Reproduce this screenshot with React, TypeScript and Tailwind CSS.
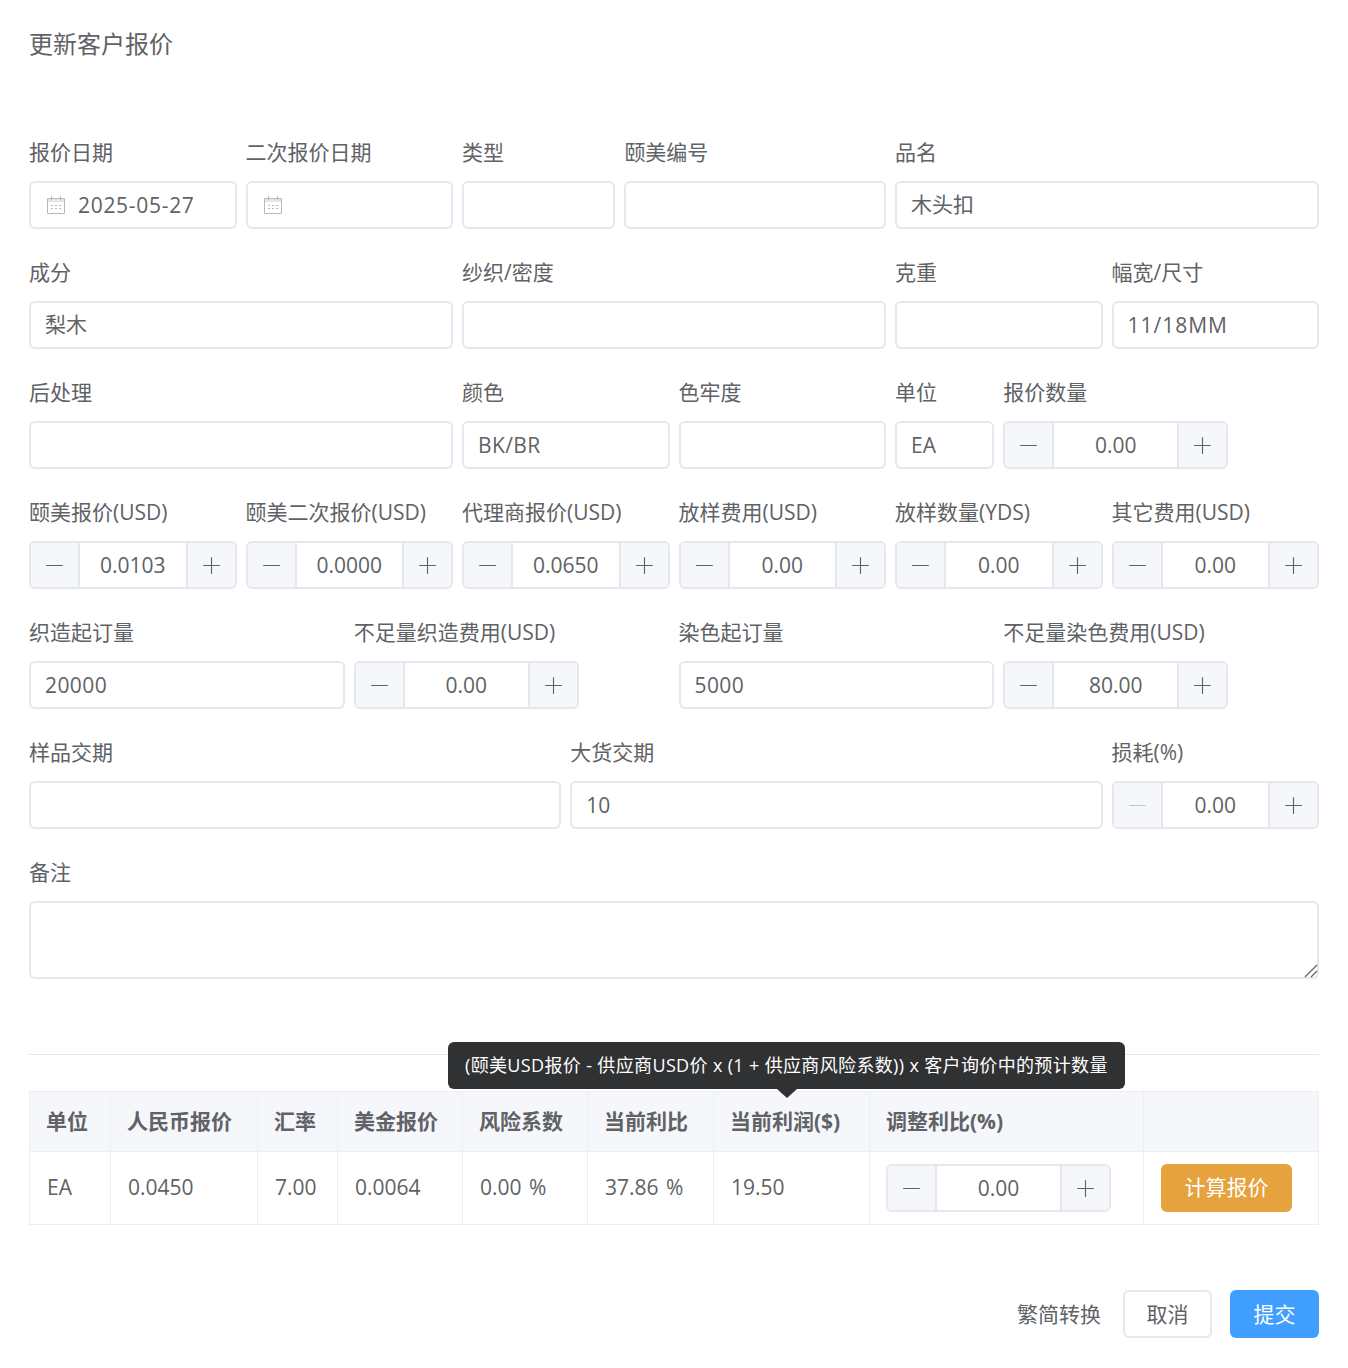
import { Minus, Plus } from "lucide-react";

const font = "font-['Open_Sans','Noto_Sans_CJK_SC',sans-serif]";

function CalendarIcon() {
    return (
        <svg width="20" height="20" viewBox="0 0 20 20" fill="none" className="shrink-0 text-[#b4b8c0]">
            <path d="M1.5 3.5h17v15h-17z" stroke="currentColor" />
            <path d="M1.5 3.5h17v3.5h-17z" fill="currentColor" opacity="0.35" />
            <path d="M5.5 1v4M14.5 1v4" stroke="currentColor" />
            <path d="M5 10.5h2M9 10.5h2M13 10.5h2M5 13.5h2M9 13.5h2M13 13.5h2" stroke="currentColor" />
        </svg>
    );
}

function Field({ label, span, children }: { label: string; span: string; children: React.ReactNode }) {
    return (
        <div className={span + " mb-[28px]"}>
            <div className="h-[32px] leading-[31px] mb-[12px] text-[21px] text-[#606266] whitespace-nowrap">{label}</div>
            {children}
        </div>
    );
}

function TextInput({ value = "", extra = "" }: { value?: string; extra?: string }) {
    return (
        <input
            readOnly
            value={value}
            className={"block w-full h-[48px] px-[14px] border-2 border-[#e4e7ed] rounded-[6px] bg-white text-[21px] text-[#606266] outline-none " + extra}
        />
    );
}

function DateInput({ value = "" }: { value?: string }) {
    return (
        <div className="flex items-center gap-[12px] h-[48px] pl-[15px] border-2 border-[#e4e7ed] rounded-[6px] bg-white text-[21px] text-[#606266]">
            <CalendarIcon />
            <span className="pt-[2px] tracking-[0.7px]">{value}</span>
        </div>
    );
}

function Stepper({ value, fixed, disabled }: { value: string; fixed?: boolean; disabled?: boolean }) {
    return (
        <div className={(fixed ? "w-[225px] " : "w-full ") + "flex h-[48px] border-2 border-[#e4e7ed] rounded-[6px] overflow-hidden bg-white"}>
            <div className="w-[49px] shrink-0 flex items-center justify-center bg-[#f5f7fa] border-r-2 border-[#e4e7ed]">
                <Minus size={27} strokeWidth={1} className={disabled ? "text-[#c0c4cc]" : "text-[#606266]"} />
            </div>
            <div className="flex-1 min-w-0 flex items-center justify-center pt-[2px] text-[21px] text-[#606266]">{value}</div>
            <div className="w-[49px] shrink-0 flex items-center justify-center bg-[#f5f7fa] border-l-2 border-[#e4e7ed]">
                <Plus size={27} strokeWidth={1} className="text-[#606266]" />
            </div>
        </div>
    );
}

const headers = [
    { name: "单位", w: "w-[81px]" },
    { name: "人民币报价", w: "w-[147px]" },
    { name: "汇率", w: "w-[80px]" },
    { name: "美金报价", w: "w-[125px]" },
    { name: "风险系数", w: "w-[125px]" },
    { name: "当前利比", w: "w-[126px]" },
    { name: "当前利润($)", w: "w-[156px]" },
    { name: "调整利比(%)", w: "w-[274px]" },
    { name: "", w: "w-[175px]" },
];
const cells = ["EA", "0.0450", "7.00", "0.0064", "0.00 %", "37.86 %", "19.50"];

export default function App() {
    return (
        <div className={font + " w-[1348px] h-[1368px] bg-white px-[29px] overflow-hidden"}>
            <div className="h-[137px] pt-[27px] text-[24px] leading-[34px] text-[#606266]">更新客户报价</div>

            <div className="grid grid-cols-[repeat(24,minmax(0,1fr))] gap-x-[9px]">
                <Field label="报价日期" span="col-span-4"><DateInput value="2025-05-27" /></Field>
                <Field label="二次报价日期" span="col-span-4"><DateInput /></Field>
                <Field label="类型" span="col-span-3"><TextInput /></Field>
                <Field label="颐美编号" span="col-span-5"><TextInput /></Field>
                <Field label="品名" span="col-span-8"><TextInput value="木头扣" extra="pb-[4px]" /></Field>

                <Field label="成分" span="col-span-8"><TextInput value="梨木" extra="pb-[4px]" /></Field>
                <Field label="纱织/密度" span="col-span-8"><TextInput /></Field>
                <Field label="克重" span="col-span-4"><TextInput /></Field>
                <Field label="幅宽/尺寸" span="col-span-4"><TextInput value="11/18MM" extra="tracking-[1px]" /></Field>

                <Field label="后处理" span="col-span-8"><TextInput /></Field>
                <Field label="颜色" span="col-span-4"><TextInput value="BK/BR" extra="tracking-[0.4px]" /></Field>
                <Field label="色牢度" span="col-span-4"><TextInput /></Field>
                <Field label="单位" span="col-span-2"><TextInput value="EA" /></Field>
                <Field label="报价数量" span="col-span-6"><Stepper value="0.00" fixed /></Field>

                <Field label="颐美报价(USD)" span="col-span-4"><Stepper value="0.0103" /></Field>
                <Field label="颐美二次报价(USD)" span="col-span-4"><Stepper value="0.0000" /></Field>
                <Field label="代理商报价(USD)" span="col-span-4"><Stepper value="0.0650" /></Field>
                <Field label="放样费用(USD)" span="col-span-4"><Stepper value="0.00" /></Field>
                <Field label="放样数量(YDS)" span="col-span-4"><Stepper value="0.00" /></Field>
                <Field label="其它费用(USD)" span="col-span-4"><Stepper value="0.00" /></Field>

                <Field label="织造起订量" span="col-span-6"><TextInput value="20000" extra="tracking-[0.4px]" /></Field>
                <Field label="不足量织造费用(USD)" span="col-span-6"><Stepper value="0.00" fixed /></Field>
                <Field label="染色起订量" span="col-span-6"><TextInput value="5000" extra="tracking-[0.4px]" /></Field>
                <Field label="不足量染色费用(USD)" span="col-span-6"><Stepper value="80.00" fixed /></Field>

                <Field label="样品交期" span="col-span-10"><TextInput /></Field>
                <Field label="大货交期" span="col-span-10"><TextInput value="10" /></Field>
                <Field label="损耗(%)" span="col-span-4"><Stepper value="0.00" disabled /></Field>
            </div>

            <div className="h-[32px] leading-[31px] mb-[12px] text-[21px] text-[#606266]">备注</div>
            <div className="relative">
                <textarea readOnly className="block w-full h-[78px] border-2 border-[#e4e7ed] rounded-[6px] bg-white outline-none resize-none" />
                <svg width="14" height="14" viewBox="0 0 14 14" className="absolute right-[1px] bottom-[1px] text-[#606266]">
                    <path d="M1 13L13 1M7 13l6-6" stroke="currentColor" strokeWidth="1.2" fill="none" />
                </svg>
            </div>

            <div className="relative mt-[75px] border-t border-[#e4e6eb] pt-[36px]">
                <div className="absolute left-[419px] top-[-13px] h-[47px] w-[677px] px-[17px] flex items-center bg-[#303133] rounded-[6px] text-[18px] tracking-[0.35px] text-white whitespace-nowrap z-10">
                    (颐美USD报价 - 供应商USD价 x (1 + 供应商风险系数)) x 客户询价中的预计数量
                    <div className="absolute left-[329px] bottom-[-9px] w-0 h-0 border-x-[10px] border-x-transparent border-t-[9px] border-t-[#303133]" />
                </div>
                <table className="w-[1290px] table-fixed border-collapse text-[21px] text-[#606266]">
                    <thead>
                        <tr className="h-[60px] bg-[#f5f7fa]">
                            {headers.map((h) => (
                                <th key={h.name} className={h.w + " border border-[#ebeef5] px-[16px] text-left font-bold"}>{h.name}</th>
                            ))}
                        </tr>
                    </thead>
                    <tbody>
                        <tr className="h-[73px]">
                            {cells.map((c) => (
                                <td key={c} className="border border-[#ebeef5] pl-[17px] pr-[16px] [word-spacing:2px]">{c}</td>
                            ))}
                            <td className="border border-[#ebeef5] px-[16px]"><Stepper value="0.00" fixed /></td>
                            <td className="border border-[#ebeef5] pl-[17px]">
                                <div className="flex items-center justify-center w-[131px] h-[48px] rounded-[6px] bg-[#e6a23c] text-white">计算报价</div>
                            </td>
                        </tr>
                    </tbody>
                </table>
            </div>

            <div className="flex items-center justify-end mt-[65px] text-[21px]">
                <span className="text-[#606266] mr-[22px] pt-[2px]">繁简转换</span>
                <div className="flex items-center justify-center w-[89px] h-[48px] pt-[2px] border-2 border-[#e4e7ed] rounded-[6px] text-[#606266] mr-[18px]">取消</div>
                <div className="flex items-center justify-center w-[89px] h-[48px] pt-[2px] rounded-[6px] bg-[#409eff] text-white">提交</div>
            </div>
        </div>
    );
}
